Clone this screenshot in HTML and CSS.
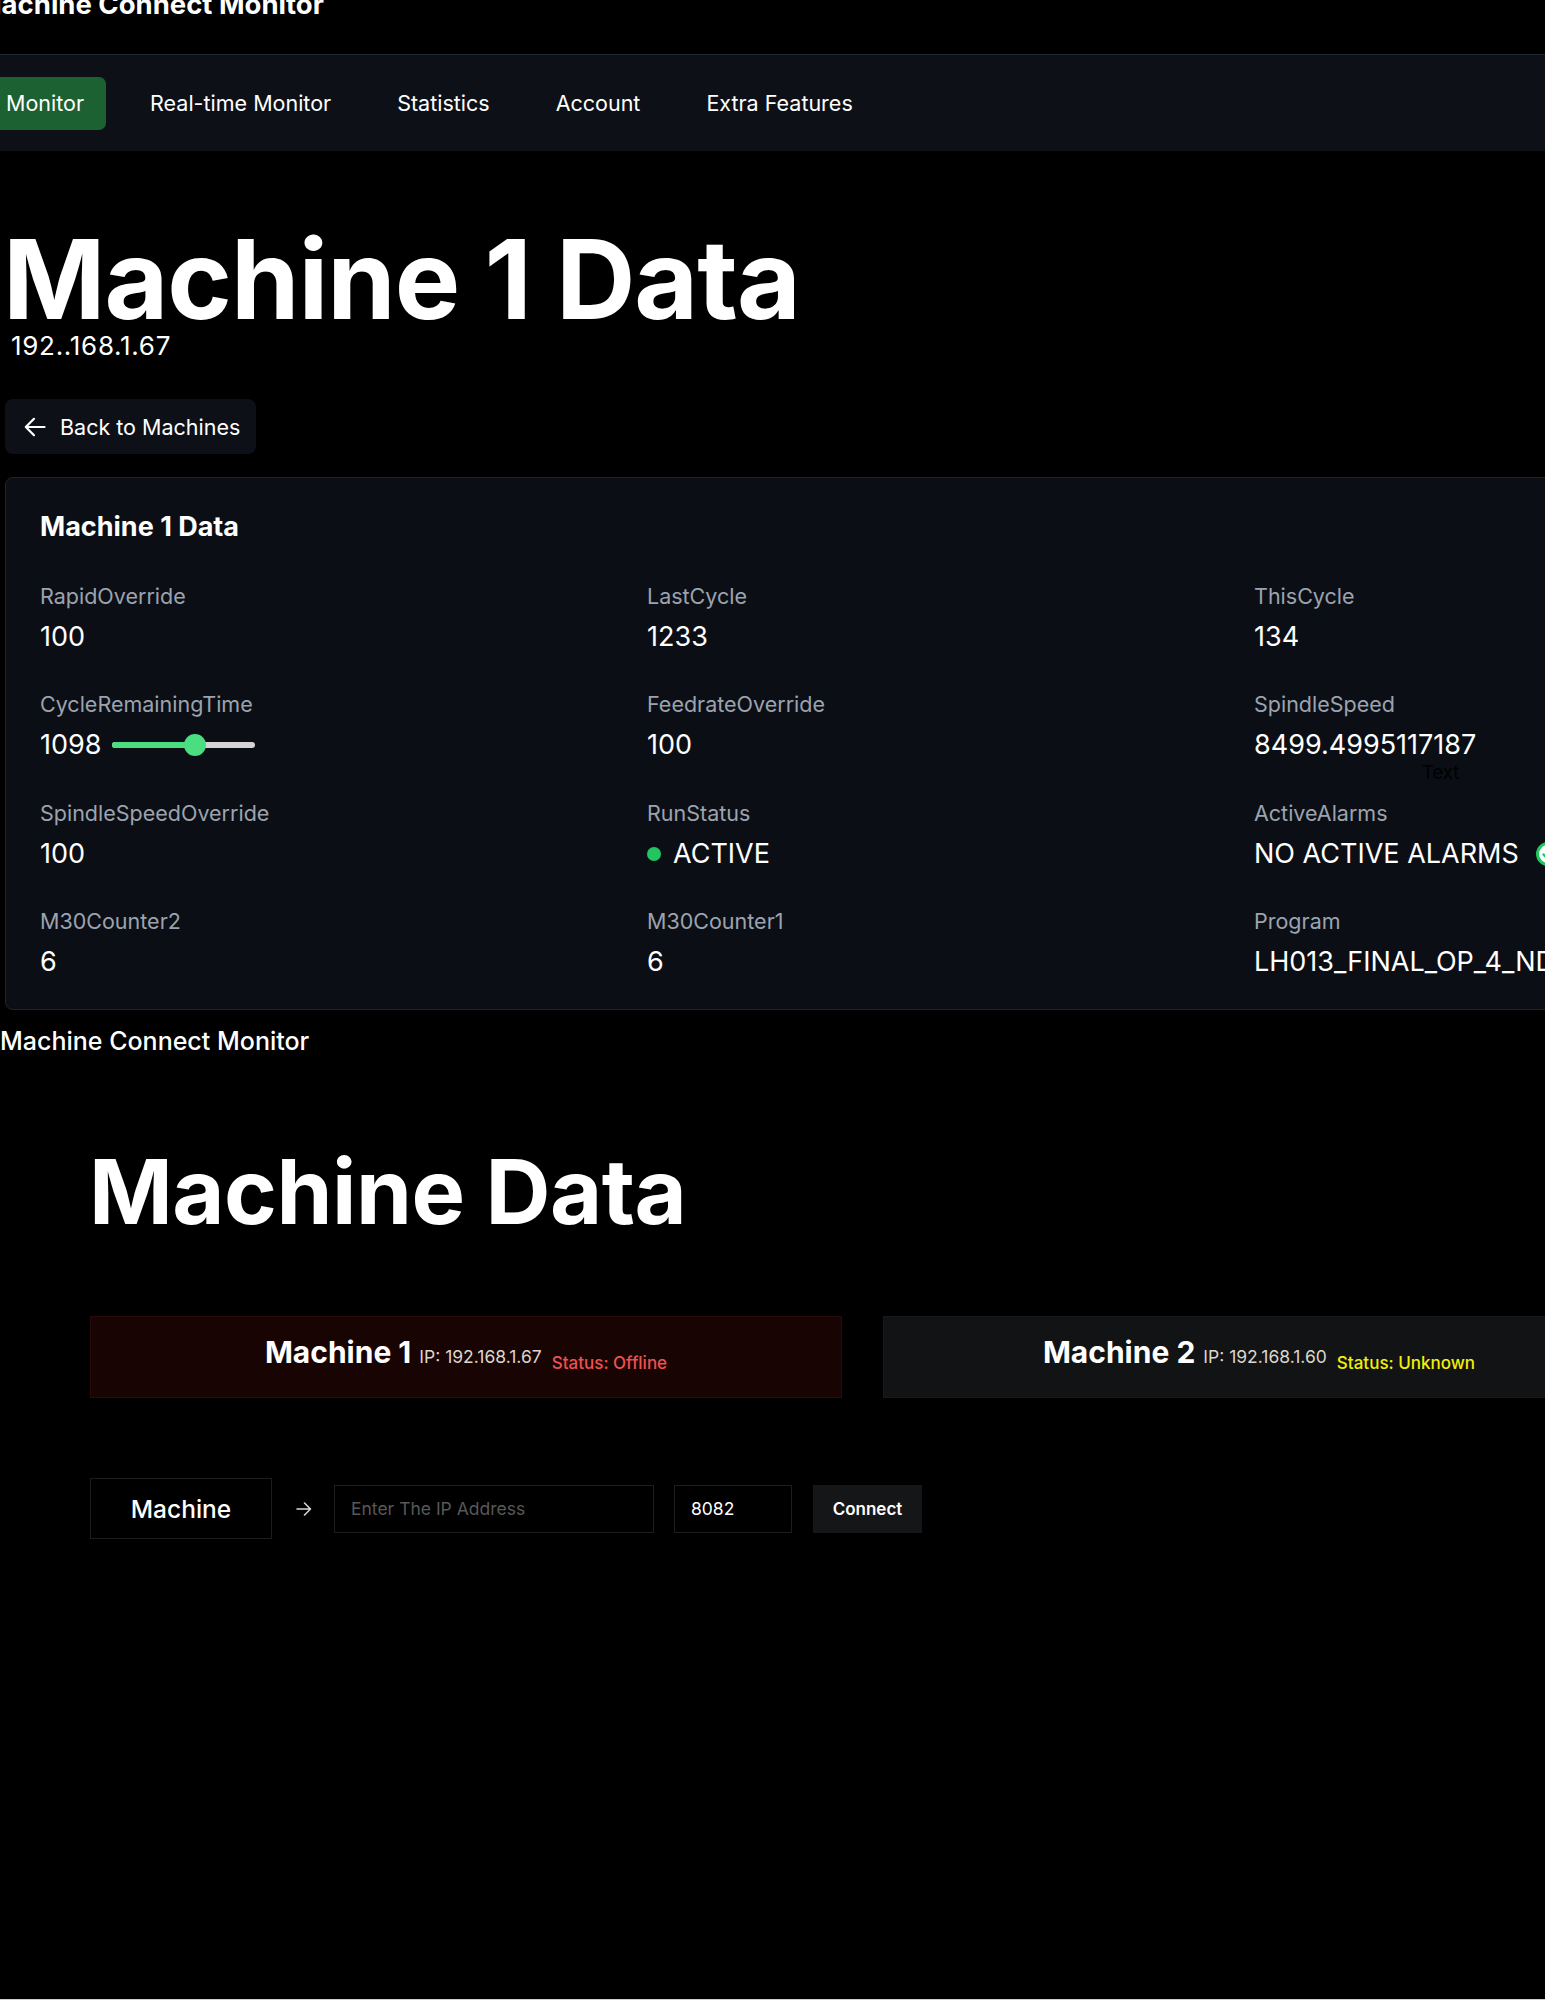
FILE: index.html
```html
<!DOCTYPE html>
<html lang="en">
<head>
<meta charset="utf-8">
<title>Machine Connect Monitor</title>
<link rel="stylesheet" href="styles.css">
</head>
<body>
<div class="page">
  <section class="monitor">
    <h1 class="app-title">Machine Connect Monitor</h1>
    <nav class="nav">
      <ul class="nav-list">
        <li class="nav-item active">Monitor</li>
        <li class="nav-item">Real-time Monitor</li>
        <li class="nav-item">Statistics</li>
        <li class="nav-item">Account</li>
        <li class="nav-item">Extra Features</li>
      </ul>
    </nav>
    <main class="detail">
      <h2 class="detail-title">Machine 1 Data</h2>
      <p class="detail-ip">192..168.1.67</p>
      <button class="back-btn" type="button">
        <svg class="back-icon" width="22" height="20" viewBox="0 0 22 20" aria-hidden="true">
          <path d="M20.5 10H1.8M10 1.8L1.8 10l8.2 8.2" fill="none" stroke="#fff" stroke-width="2.2" stroke-linecap="round" stroke-linejoin="round"/>
        </svg>
        <span>Back to Machines</span>
      </button>
      <div class="data-card">
        <h3 class="card-title">Machine 1 Data</h3>
        <div class="data-grid">
          <div class="field"><div class="label">RapidOverride</div><div class="value">100</div></div>
          <div class="field"><div class="label">LastCycle</div><div class="value">1233</div></div>
          <div class="field"><div class="label">ThisCycle</div><div class="value">134</div></div>

          <div class="field"><div class="label">CycleRemainingTime</div>
            <div class="value">1098
              <div class="slider"><div class="slider-fill" style="width:58%"></div><div class="slider-thumb" style="left:58%"></div></div>
            </div>
          </div>
          <div class="field"><div class="label">FeedrateOverride</div><div class="value">100</div></div>
          <div class="field"><div class="label">SpindleSpeed</div><div class="value">8499.4995117187<span class="ghost-text">Text</span></div></div>

          <div class="field"><div class="label">SpindleSpeedOverride</div><div class="value">100</div></div>
          <div class="field"><div class="label">RunStatus</div><div class="value"><span class="dot"></span>ACTIVE</div></div>
          <div class="field"><div class="label">ActiveAlarms</div>
            <div class="value">NO ACTIVE ALARMS
              <svg class="ok-icon" width="24" height="24" viewBox="0 0 24 24" aria-hidden="true">
                <circle cx="12" cy="12" r="10.5" fill="#fff" stroke="#22c55e" stroke-width="3"/>
                <path d="M7.5 12.5l3 3 6-6.5" fill="none" stroke="#22c55e" stroke-width="2.4" stroke-linecap="round" stroke-linejoin="round"/>
              </svg>
            </div>
          </div>

          <div class="field"><div class="label">M30Counter2</div><div class="value">6</div></div>
          <div class="field"><div class="label">M30Counter1</div><div class="value">6</div></div>
          <div class="field"><div class="label">Program</div><div class="value">LH013_FINAL_OP_4_NDR_2024</div></div>
        </div>
      </div>
    </main>
  </section>

  <section class="connect">
    <div class="connect-title">Machine Connect Monitor</div>
    <div class="connect-body">
      <h2 class="connect-heading">Machine Data</h2>
      <div class="machine-list">
        <div class="machine-card offline">
          <p class="m-line"><span class="m-name">Machine 1</span><span class="m-ip">IP: 192.168.1.67</span><span class="m-status status-offline">Status: Offline</span></p>
        </div>
        <div class="machine-card unknown">
          <p class="m-line"><span class="m-name">Machine 2</span><span class="m-ip">IP: 192.168.1.60</span><span class="m-status status-unknown">Status: Unknown</span></p>
        </div>
      </div>
      <form class="connect-form">
        <div class="machine-box">Machine</div>
        <svg class="form-arrow" width="16" height="14" viewBox="0 0 16 14" aria-hidden="true">
          <path d="M1 7h13.5M8.5 1l6 6-6 6" fill="none" stroke="#d9d9d9" stroke-width="1.5" stroke-linecap="round" stroke-linejoin="round"/>
        </svg>
        <input class="ip-input" type="text" placeholder="Enter The IP Address">
        <input class="port-input" type="text" value="8082">
        <button class="connect-btn" type="button">Connect</button>
      </form>
    </div>
  </section>
</div>
</body>
</html>
```

FILE: styles.css
```css
* { box-sizing: border-box; }

html, body {
  margin: 0;
  padding: 0;
  background: #000;
  color: #fff;
  font-family: Inter, "Noto Sans", "Liberation Sans", sans-serif;
  overflow-x: hidden;
}

.page {
  min-height: 2000px;
  border-bottom: 1px solid #cfcfcf;
  overflow: hidden;
}

/* ---------- top: monitor ---------- */
.app-title {
  margin: -12px 0 34px -24px;
  font-size: 27.5px;
  line-height: 32px;
  font-weight: 700;
}

.nav {
  height: 97px;
  background: #0d1117;
  border-top: 1px solid #1e2631;
  display: flex;
  align-items: center;
}

.nav-list {
  list-style: none;
  margin: 0 0 0 -16px;
  padding: 0;
  display: flex;
  gap: 22px;
}

.nav-item {
  padding: 12px 22px;
  font-size: 21.5px;
  line-height: 29px;
  border-radius: 7px;
  color: #fff;
}

.nav-item.active { background: #1b6132; }

.detail { padding-left: 5px; }

.detail-title {
  margin: 78px 0 0 -2px;
  font-size: 110px;
  line-height: 100px;
  font-weight: 700;
  letter-spacing: -1px;
}

.detail-ip {
  margin: 3px 0 0 6px;
  font-size: 26px;
  line-height: 28px;
  letter-spacing: 0.7px;
}

.back-btn {
  margin-top: 39px;
  height: 55px;
  display: flex;
  align-items: center;
  gap: 14px;
  padding: 0 16px 0 19px;
  background: #0d1117;
  border: 0;
  border-radius: 8px;
  color: #fff;
  font-family: inherit;
  font-size: 21.5px;
}

.data-card {
  margin-top: 23px;
  width: 1860px;
  height: 533px;
  background: #0b0f15;
  border: 1px solid #1d2430;
  border-radius: 8px;
  padding: 33px 34px 0;
}

.card-title {
  margin: 0;
  font-size: 27px;
  line-height: 32px;
  font-weight: 700;
}

.data-grid {
  margin-top: 39px;
  display: grid;
  grid-template-columns: repeat(3, 567px);
  column-gap: 40px;
  row-gap: 37.4px;
}

.label {
  font-size: 21.5px;
  line-height: 28px;
  color: #9ca3af;
}

.value {
  position: relative;
  margin-top: 11px;
  display: flex;
  align-items: center;
  font-size: 27px;
  line-height: 32px;
  color: #fff;
  white-space: nowrap;
}

.slider {
  position: relative;
  margin-left: 11px;
  width: 143px;
  height: 6px;
  border-radius: 3px;
  background: #d4d4d4;
}

.slider-fill {
  height: 100%;
  border-radius: 3px;
  background: #4ade80;
}

.slider-thumb {
  position: absolute;
  top: 50%;
  width: 22px;
  height: 22px;
  margin: -11px 0 0 -11px;
  border-radius: 50%;
  background: #4ade80;
}

.ghost-text {
  position: absolute;
  left: 168px;
  top: 33px;
  font-size: 18.5px;
  line-height: 20px;
  color: #000;
}

.dot {
  width: 14px;
  height: 14px;
  border-radius: 50%;
  background: #22c55e;
  margin-right: 12px;
}

.ok-icon { margin-left: 17px; }

/* ---------- bottom: connect ---------- */
.connect-title {
  margin-top: 16px;
  font-size: 25px;
  line-height: 30px;
  font-weight: 500;
}

.connect-body { padding-left: 90px; }

.connect-heading {
  margin: 92px 0 0 -1px;
  font-size: 90px;
  line-height: 88px;
  font-weight: 700;
  letter-spacing: -0.5px;
}

.machine-list {
  margin-top: 80px;
  display: flex;
  gap: 41px;
}

.machine-card {
  flex: 0 0 752px;
  height: 82px;
  display: flex;
  align-items: center;
  justify-content: center;
  border: 1px solid;
  white-space: nowrap;
}

.machine-card.offline { background: #190404; border-color: #2a0b0b; }
.machine-card.unknown { background: #111315; border-color: #17191b; }

.m-line {
  margin: 0;
  line-height: 36px;
}

.m-name {
  font-size: 30px;
  font-weight: 700;
}

.m-ip {
  margin-left: 8px;
  font-size: 17.5px;
  color: #dcd6cc;
}

.m-status {
  margin-left: 10px;
  font-size: 17px;
  font-weight: 500;
  vertical-align: -6px;
}

.status-offline { color: #f05050; }
.status-unknown { color: #f2ef0c; }

.connect-form {
  margin-top: 80px;
  display: flex;
  align-items: center;
}

.machine-box {
  width: 182px;
  height: 61px;
  display: flex;
  align-items: center;
  justify-content: center;
  border: 1px solid #1c1c1c;
  font-size: 24.5px;
  font-weight: 500;
}

.form-arrow { margin: 0 22px 0 24px; }

.ip-input,
.port-input {
  height: 48px;
  background: #000;
  border: 1px solid #1d1d1d;
  color: #fff;
  font-family: inherit;
  font-size: 17.5px;
  padding: 0 16px;
  outline: none;
}

.ip-input { width: 320px; }
.ip-input::placeholder { color: #585858; }

.port-input {
  width: 118px;
  margin-left: 20px;
}

.connect-btn {
  margin-left: 21px;
  width: 109px;
  height: 48px;
  background: #151617;
  border: 0;
  color: #fff;
  font-family: inherit;
  font-size: 17px;
  font-weight: 600;
}
```
